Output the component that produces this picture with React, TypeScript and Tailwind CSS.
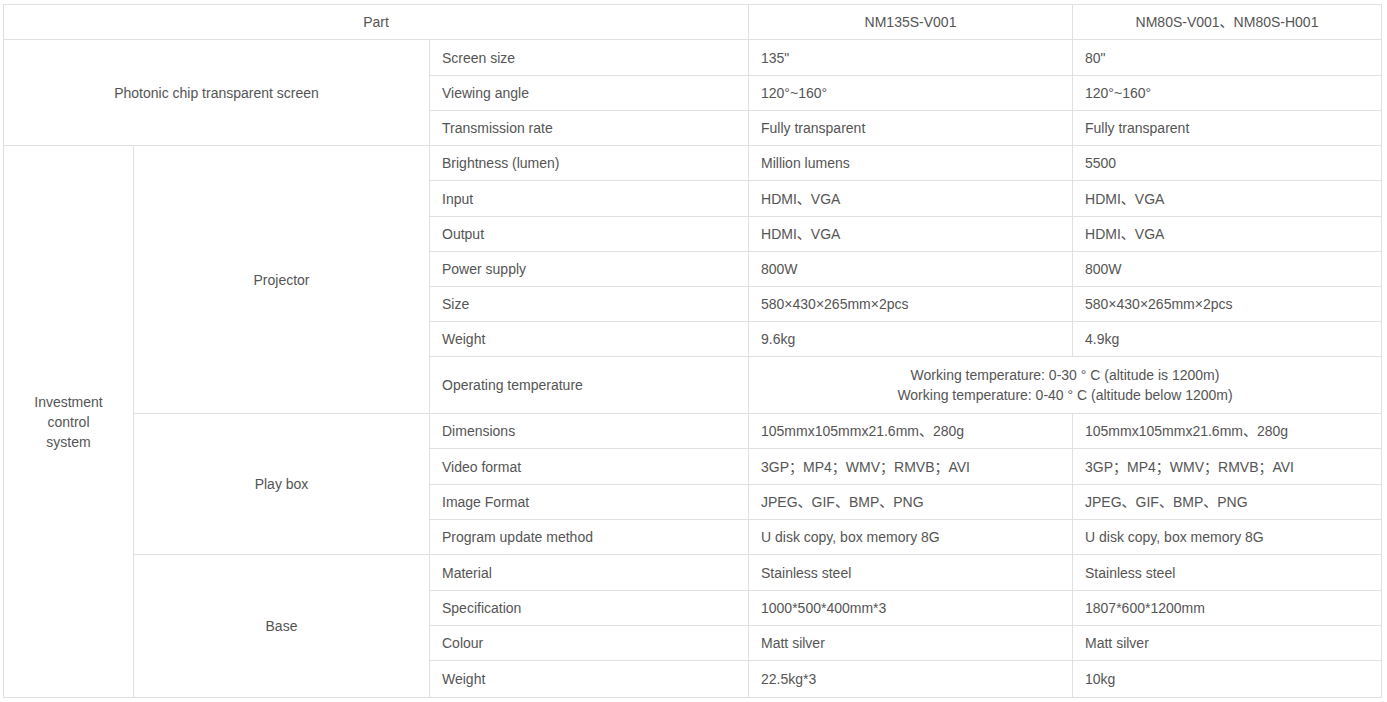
import React from "react";

const td = "border border-[#e0e0e0] px-3 align-middle";

export default function App() {
  return (
    <div
      className="bg-white w-[1387px] h-[702px] pt-[4px] pl-[3px] text-[14px] leading-[20px] text-[#555]"
      style={{ fontFamily: '"Liberation Sans", Arial, "Noto Sans CJK SC", sans-serif' }}
    >
      <table className="table-fixed border-collapse w-[1378px]">
        <colgroup>
          <col className="w-[130px]" />
          <col className="w-[296px]" />
          <col className="w-[319px]" />
          <col className="w-[324px]" />
          <col className="w-[309px]" />
        </colgroup>
        <tbody>
          <tr className="h-[35px]">
            <td colSpan={3} className={`${td} text-center`}>Part</td>
            <td className={`${td} text-center`}>NM135S-V001</td>
            <td className={`${td} text-center`}>NM80S-V001、NM80S-H001</td>
          </tr>
          <tr className="h-[36px]">
            <td colSpan={2} rowSpan={3} className={`${td} text-center`}>Photonic chip transparent screen</td>
            <td className={td}>Screen size</td>
            <td className={td}>135"</td>
            <td className={td}>80"</td>
          </tr>
          <tr className="h-[35px]">
            <td className={td}>Viewing angle</td>
            <td className={td}>120°~160°</td>
            <td className={td}>120°~160°</td>
          </tr>
          <tr className="h-[35px]">
            <td className={td}>Transmission rate</td>
            <td className={td}>Fully transparent</td>
            <td className={td}>Fully transparent</td>
          </tr>
          <tr className="h-[35px]">
            <td rowSpan={15} className={`${td} text-center`}>
              Investment
              <br />
              control
              <br />
              system
            </td>
            <td rowSpan={7} className={`${td} text-center`}>Projector</td>
            <td className={td}>Brightness (lumen)</td>
            <td className={td}>Million lumens</td>
            <td className={td}>5500</td>
          </tr>
          <tr className="h-[36px]">
            <td className={td}>Input</td>
            <td className={td}>HDMI、VGA</td>
            <td className={td}>HDMI、VGA</td>
          </tr>
          <tr className="h-[35px]">
            <td className={td}>Output</td>
            <td className={td}>HDMI、VGA</td>
            <td className={td}>HDMI、VGA</td>
          </tr>
          <tr className="h-[35px]">
            <td className={td}>Power supply</td>
            <td className={td}>800W</td>
            <td className={td}>800W</td>
          </tr>
          <tr className="h-[35px]">
            <td className={td}>Size</td>
            <td className={td}>580×430×265mm×2pcs</td>
            <td className={td}>580×430×265mm×2pcs</td>
          </tr>
          <tr className="h-[35px]">
            <td className={td}>Weight</td>
            <td className={td}>9.6kg</td>
            <td className={td}>4.9kg</td>
          </tr>
          <tr className="h-[57px]">
            <td className={td}>Operating temperature</td>
            <td colSpan={2} className={`${td} text-center`}>
              Working temperature: 0-30 ° C (altitude is 1200m)
              <br />
              Working temperature: 0-40 ° C (altitude below 1200m)
            </td>
          </tr>
          <tr className="h-[35px]">
            <td rowSpan={4} className={`${td} text-center`}>Play box</td>
            <td className={td}>Dimensions</td>
            <td className={td}>105mmx105mmx21.6mm、280g</td>
            <td className={td}>105mmx105mmx21.6mm、280g</td>
          </tr>
          <tr className="h-[36px]">
            <td className={td}>Video format</td>
            <td className={td}>3GP；MP4；WMV；RMVB；AVI</td>
            <td className={td}>3GP；MP4；WMV；RMVB；AVI</td>
          </tr>
          <tr className="h-[35px]">
            <td className={td}>Image Format</td>
            <td className={td}>JPEG、GIF、BMP、PNG</td>
            <td className={td}>JPEG、GIF、BMP、PNG</td>
          </tr>
          <tr className="h-[35px]">
            <td className={td}>Program update method</td>
            <td className={td}>U disk copy, box memory 8G</td>
            <td className={td}>U disk copy, box memory 8G</td>
          </tr>
          <tr className="h-[36px]">
            <td rowSpan={4} className={`${td} text-center`}>Base</td>
            <td className={td}>Material</td>
            <td className={td}>Stainless steel</td>
            <td className={td}>Stainless steel</td>
          </tr>
          <tr className="h-[35px]">
            <td className={td}>Specification</td>
            <td className={td}>1000*500*400mm*3</td>
            <td className={td}>1807*600*1200mm</td>
          </tr>
          <tr className="h-[35px]">
            <td className={td}>Colour</td>
            <td className={td}>Matt silver</td>
            <td className={td}>Matt silver</td>
          </tr>
          <tr className="h-[37px]">
            <td className={td}>Weight</td>
            <td className={td}>22.5kg*3</td>
            <td className={td}>10kg</td>
          </tr>
        </tbody>
      </table>
    </div>
  );
}
